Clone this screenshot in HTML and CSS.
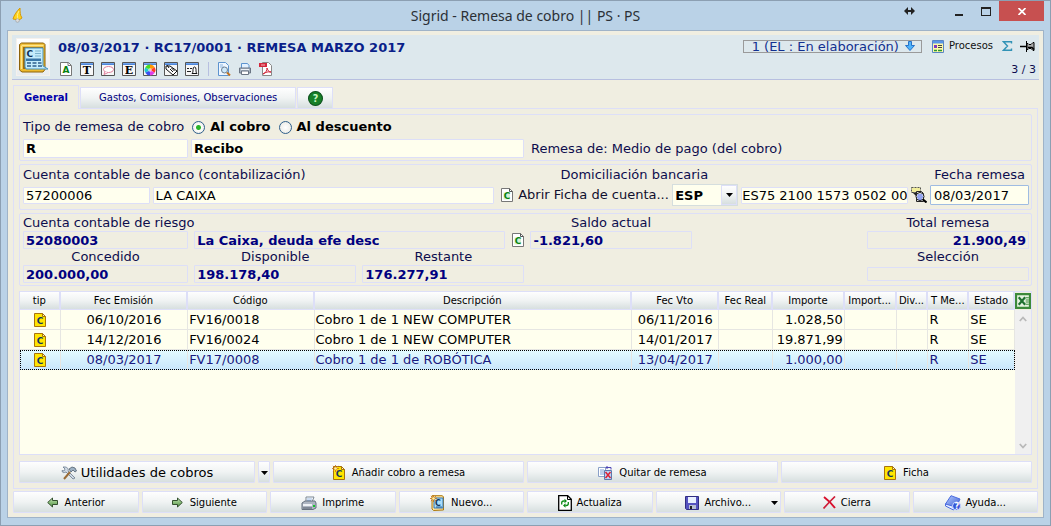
FILE: index.html
```html
<!DOCTYPE html>
<html lang="es">
<head>
<meta charset="utf-8">
<title>Sigrid - Remesa de cobro</title>
<link rel="stylesheet" href="styles.css">
</head>
<body>
<svg class="defs" aria-hidden="true">
  <defs>
    <linearGradient id="bar" x1="0" y1="0" x2="0" y2="1"><stop offset="0" stop-color="#7fb2f5"/><stop offset="1" stop-color="#3f78d0"/></linearGradient>
    <linearGradient id="blue" x1="0" y1="0" x2="1" y2="1"><stop offset="0" stop-color="#b9d0ff"/><stop offset="1" stop-color="#3353cf"/></linearGradient>
    <linearGradient id="green" x1="0" y1="0" x2="0" y2="1"><stop offset="0" stop-color="#c5e6b4"/><stop offset="1" stop-color="#4f9340"/></linearGradient>
    <symbol id="card" viewBox="0 0 12 14"><path d="M.5.5h8l3 3v10H.5z" fill="#ffe600" stroke="#a8730c"/><path d="M8.500.500v3h3z" fill="#fff6b0" stroke="#a8730c"/><text x="2.800" y="10.500" font-family="DejaVu Sans" font-size="9" font-weight="700" fill="#13375c">C</text></symbol>
    <symbol id="sheet" viewBox="0 0 12 14"><path d="M.5.5h8l3 3v10H.5z" fill="#fff" stroke="#777"/><path d="M8.500.500v3h3" fill="none" stroke="#555"/><path d="M2.500 4.500h6.500v7H2.500z" fill="#d5f0d5"/><text x="2.800" y="10.500" font-family="DejaVu Sans" font-size="9" font-weight="700" fill="#07820f">C</text></symbol>
    <symbol id="frame" viewBox="0 0 14 14"><path d="M.5.5h13v13H.5z" fill="#f7f7f7" stroke="#555"/><path d="M1 1h12v2H1z" fill="url(#bar)"/></symbol>
    <symbol id="spark" viewBox="0 0 8 8"><path d="M4 0v8M0 4h8M1 1l6 6M7 1L1 7" stroke="#c9781f"/><circle cx="4" cy="4" r="1.500" fill="#fff2a0"/></symbol>
    <symbol id="printer" viewBox="0 0 16 14"><path d="M5 6V1h8l-2 5z" fill="#fff" stroke="#7b8794"/><path d="M6 3h5M6 4.500h4" stroke="#6b9ad6" stroke-width=".7"/><path d="M1 7l3-2h10l1 2v5l-3 1.500H1z" fill="#aeb6c2" stroke="#66707e"/><path d="M2 8h9v2H2z" fill="#eef1f5"/><path d="M2 12h9" stroke="#505a68"/></symbol>
    <symbol id="caret" viewBox="0 0 7 4"><path d="M0 0h7L3.500 4z" fill="#000"/></symbol>
  </defs>
</svg>

<div class="window">
  <header class="titlebar">
    <svg class="app-icon" viewBox="0 0 12 16"><path d="M8 1C5 4 2 8 1 12l6 1 3-2C8 8 8 5 8 1z" fill="#ffd31c" stroke="#d59a08"/><path d="M7 4C5 7 5 10 6 12" stroke="#fff08a" fill="none"/><circle cx="5.500" cy="13.500" r="1.800" fill="#ddd" stroke="#999" stroke-width=".6"/></svg>
    <h1 class="caption">Sigrid - Remesa de cobro || PS · PS</h1>
    <div class="win-buttons">
      <button class="win-btn resize" aria-label="Mover"><svg width="11" height="8" viewBox="0 0 11 8"><path d="M1 4h9" stroke="#222" stroke-width="2"/><path d="M4 0v8L0 4zM7 0v8l4-4z" fill="#222"/></svg></button>
      <button class="win-btn min" aria-label="Minimizar"><svg width="10" height="9" viewBox="0 0 10 9"><path d="M1 8h8" stroke="#222" stroke-width="2"/></svg></button>
      <button class="win-btn max" aria-label="Maximizar"><svg width="10" height="9" viewBox="0 0 10 9"><path d="M0 0h10v9H0zM1 2v6h8V2z" fill="#222" fill-rule="evenodd"/></svg></button>
      <button class="win-btn close" aria-label="Cerrar"><svg width="8" height="7" viewBox="0 0 8 7"><path d="M.5 0l7 7M7.500 0l-7 7" stroke="#fff" stroke-width="1.700"/></svg></button>
    </div>
  </header>

  <main class="client">
    <section class="record">
      <div class="record-icon"><svg width="31" height="31" viewBox="0 0 31 31"><path d="M1.500 2.500l2-1.500h22l1.500 1.500v25L25 30H4l-2.500-2z" fill="#edb92c" stroke="#8d620a"/><path d="M3.500 3.500h22M3.500 4v23" stroke="#ffe58a" stroke-width="1.500" fill="none"/><path d="M5 5h20v22H5z" fill="#a06d0c"/><path d="M7 6h18v18l5 3H8l-1-2z" fill="#c4ecfb" stroke="#4893bd"/><path d="M17 9h6M17 11.500h6M17 14h6" stroke="#7ab2cc"/><path d="M8 16.500h15V19H8z" fill="#3977a8"/><path d="M9 21h4M14.500 21h4M20 21h3.500M9 24h4M14.500 24h4M20 24h4" stroke="#2e5f8c" stroke-width="1.500"/><text x="8.500" y="15" font-family="DejaVu Sans" font-weight="700" font-size="9" fill="#0d3157">C</text></svg></div>
      <div class="record-main">
        <h2 class="record-title">08/03/2017 · RC17/0001 · REMESA MARZO 2017</h2>
        <div class="tools">
          <button class="tool" aria-label="Ficha"><svg viewBox="0 0 14 14"><path d="M1.500.500h8l3 3v10h-11z" fill="#fff" stroke="#777"/><path d="M9 .500v3h3" fill="none" stroke="#777"/><text x="3.500" y="11" font-family="DejaVu Sans" font-size="9" font-weight="700" fill="#07820f">A</text></svg></button>
          <button class="tool" aria-label="Texto"><svg viewBox="0 0 14 14"><use href="#frame"/><text x="2.700" y="12" font-family="DejaVu Serif" font-size="11" font-weight="700">T</text></svg></button>
          <button class="tool" aria-label="Comentario"><svg viewBox="0 0 14 14"><use href="#frame"/><ellipse cx="7.500" cy="7.500" rx="5" ry="3" fill="#fff" stroke="#e07d9b"/><path d="M4 9.500l-1 3 4-2" fill="#fff" stroke="#e07d9b"/></svg></button>
          <button class="tool" aria-label="Etiqueta"><svg viewBox="0 0 14 14"><use href="#frame"/><text x="2.700" y="12" font-family="DejaVu Serif" font-size="11" font-weight="700">E</text></svg></button>
          <button class="tool" aria-label="Color"><svg viewBox="0 0 14 14"><use href="#frame"/><path d="M7 8V2.500A5.500 5.500 0 0 1 11.800 5.200z" fill="#ff9800"/><path d="M7 8l4.800-2.800a5.500 5.500 0 0 1 0 5.600z" fill="#ff3a2a"/><path d="M7 8l4.800 2.800A5.500 5.500 0 0 1 7 13.500z" fill="#e040e8"/><path d="M7 8v5.500a5.500 5.500 0 0 1-4.800-2.700z" fill="#3a50f0"/><path d="M7 8l-4.800 2.800a5.500 5.500 0 0 1 0-5.600z" fill="#20c8d0"/><path d="M7 8L2.200 5.200A5.500 5.500 0 0 1 7 2.500z" fill="#48dd20"/><circle cx="7" cy="8" r="2" fill="#fff" opacity=".5"/></svg></button>
          <button class="tool" aria-label="Marca"><svg viewBox="0 0 14 14"><use href="#frame"/><path d="M2 4h4l7 5-4 4-7-6z" fill="#fff" stroke="#111"/><path d="M3 3l2 3M6 7l3 3M7.500 6l3 3" stroke="#111"/></svg></button>
          <button class="tool" aria-label="Aviso"><svg viewBox="0 0 14 14"><use href="#frame"/><path d="M2 6.500h2m1 0h2M2 9.500h4" stroke="#222"/><path d="M7 11.500c1-1 1-2 1-4q0-2.500 1.500-2.500T11 7.500c0 2 0 3 1 4z" fill="#fff" stroke="#111"/></svg></button>
          <span class="tool-sep"></span>
          <button class="tool" aria-label="Vista previa"><svg viewBox="0 0 14 14"><path d="M1.500.500h7l3 3v10h-10z" fill="#eef6ff" stroke="#5d93cf"/><path d="M3 3h3M3 5h4" stroke="#8db5df"/><circle cx="7.500" cy="8" r="3" fill="#cfe9fb" stroke="#6d7f90"/><path d="M10 10.500l3 3" stroke="#bf701d" stroke-width="2"/></svg></button>
          <button class="tool" aria-label="Imprimir"><svg viewBox="0 0 14 14"><path d="M3.500 6V1.500h6l1.500 2V6" fill="#e3f1ff" stroke="#5d93cf"/><path d="M1.500 6h11v5h-11z" fill="#a8b4c2" stroke="#6b7583"/><path d="M3.500 9h7v3.500h-7z" fill="#fff" stroke="#6b7583"/><path d="M3 7.500h8" stroke="#eef1f5"/></svg></button>
          <button class="tool" aria-label="PDF"><svg viewBox="0 0 14 14"><path d="M3.500.500h6l3 3v10h-9z" fill="#fff" stroke="#888"/><path d="M0 1h8v4H0z" fill="#d3293d"/><path d="M2 3h4" stroke="#f6b6bd"/><path d="M4 12c3-1 4-4 4-6 1 3 2 4 4 4-3-.5-5 0-8 2z" fill="none" stroke="#cf2438"/></svg></button>
        </div>
      </div>
      <div class="record-side">
        <div class="side-row">
          <button class="state">1 (EL : En elaboración)<svg width="10" height="10" viewBox="0 0 10 10"><path d="M3.500.500h3v4h3L5 9.500.500 4.500h3z" fill="#4fb3fb" stroke="#2672c9"/></svg></button>
          <button class="process"><svg width="12" height="13" viewBox="0 0 12 13"><path d="M.5.500h11v12H.5z" fill="#fff9a8" stroke="#5a86c4"/><path d="M1 1h10v2.500H1z" fill="#5a96e8"/><path d="M2 5h3v3H2z" fill="#8038c0"/><path d="M6 5.500h4M6 7.500h4" stroke="#444"/><path d="M2 10.500h3M6 10.500h4" stroke="#2a9834" stroke-width="1.500"/></svg>Procesos</button>
          <button class="side-icon" aria-label="Suma"><svg width="11" height="10" viewBox="0 0 11 10"><path d="M9.500 2.500V.8H1.500L5.500 5l-4 4.200h8V7.500" fill="none" stroke="#3192b6" stroke-width="1.400"/></svg></button>
          <button class="side-icon" aria-label="Fijar"><svg width="16" height="11" viewBox="0 0 16 11"><path d="M0 5.500h6" stroke="#000" stroke-width="1.500"/><path d="M6.500 0v11" stroke="#000"/><path d="M7 2.500h1l1 1h2l2-2h1v8h-1l-2-2H9l-1 1H7z" fill="#aaa" stroke="#000"/><path d="M8 6.500h4l2 2" stroke="#000" stroke-width="1.500" fill="none"/></svg></button>
        </div>
        <div class="counter">3 / 3</div>
      </div>
    </section>

    <nav class="tabs">
      <button class="tab active">General</button>
      <button class="tab wide">Gastos, Comisiones, Observaciones</button>
      <button class="tab help" aria-label="Ayuda"><svg width="15" height="15" viewBox="0 0 14 14"><circle cx="7" cy="7" r="6.500" fill="#178029" stroke="#0c501c"/><text x="4.500" y="10.500" font-family="DejaVu Sans" font-size="9" font-weight="700" fill="#c8f5c0">?</text></svg></button>
    </nav>

    <section class="panel">
      <div class="group type-group">
        <div class="type-row">
          <span>Tipo de remesa de cobro</span>
          <label class="choice"><input type="radio" name="tipo" checked>Al cobro</label>
          <label class="choice"><input type="radio" name="tipo">Al descuento</label>
        </div>
        <div class="type-fields">
          <input class="field strong" aria-label="Código de medio" value="R">
          <input class="field strong" aria-label="Medio de pago" value="Recibo">
          <span class="note">Remesa de: Medio de pago (del cobro)</span>
        </div>
      </div>

      <div class="group bank-group">
        <label class="bank-label" for="cuenta">Cuenta contable de banco (contabilización)</label>
        <label class="home-label" for="pais">Domiciliación bancaria</label>
        <label class="date-label" for="fecha">Fecha remesa</label>
        <input class="field short" id="cuenta" value="57200006">
        <input class="field short" aria-label="Nombre del banco" value="LA CAIXA">
        <button class="link-btn"><svg width="12" height="14"><use href="#sheet"/></svg>Abrir Ficha de cuenta...</button>
        <div class="combo"><select id="pais"><option>ESP</option></select><span class="combo-arrow"><svg width="7" height="4"><use href="#caret"/></svg></span></div>
        <input class="field short iban" aria-label="IBAN" value="ES75 2100 1573 0502 00">
        <button class="icon-btn" aria-label="Buscar"><svg width="16" height="16" viewBox="0 0 16 16"><path d="M.5.500h9v5h-9z" fill="#f1ed9b" stroke="#555" stroke-dasharray="2 1"/><path d="M1 5l4 4V6z" fill="#222"/><path d="M5.500 4.500h5l2 2v8h-7z" fill="#fff" stroke="#222"/><circle cx="9" cy="9.500" r="4" fill="#f4f7ff" stroke="#111"/><path d="M6.500 8h5M6 10h6M7 12h4" stroke="#3450e0"/><path d="M12 12.500l3.500 3" stroke="#000" stroke-width="2"/></svg></button>
        <input class="field date" id="fecha" value="08/03/2017">
      </div>

      <div class="group risk-group">
        <label class="wide-label" for="riesgo">Cuenta contable de riesgo</label>
        <label class="saldo-label" for="saldo">Saldo actual</label>
        <label class="total-label" for="total">Total remesa</label>
        <input class="field calc" id="riesgo" value="52080003" readonly>
        <input class="field calc risk-name" aria-label="Nombre de riesgo" value="La Caixa, deuda efe desc" readonly>
        <button class="icon-btn" aria-label="Abrir ficha"><svg width="12" height="14"><use href="#sheet"/></svg></button>
        <input class="field calc" id="saldo" value="-1.821,60" readonly>
        <input class="field calc total" id="total" value="21.900,49" readonly>
        <label class="mid" for="concedido">Concedido</label>
        <label class="mid" for="disponible">Disponible</label>
        <label class="mid rest" for="restante">Restante</label>
        <label class="mid total" for="seleccion">Selección</label>
        <input class="field calc" id="concedido" value="200.000,00" readonly>
        <input class="field calc" id="disponible" value="198.178,40" readonly>
        <input class="field calc rest" id="restante" value="176.277,91" readonly>
        <input class="field calc slim total" id="seleccion" value="" readonly>
      </div>

      <div class="grid">
        <div class="grid-body">
          <table>
            <colgroup><col class="w-tip"><col class="w-date"><col class="w-code"><col class="w-desc"><col class="w-due"><col class="w-real"><col class="w-amount"><col class="w-cur"><col class="w-div"><col class="w-mode"><col class="w-state"></colgroup>
            <thead><tr><th>tip</th><th>Fec Emisión</th><th>Código</th><th>Descripción</th><th>Fec Vto</th><th>Fec Real</th><th>Importe</th><th>Import...</th><th>Div...</th><th>T Me...</th><th>Estado</th></tr></thead>
            <tbody>
              <tr><td class="center"><svg width="12" height="14"><use href="#card"/></svg></td><td class="center">06/10/2016</td><td>FV16/0018</td><td>Cobro 1 de 1 NEW COMPUTER</td><td class="center">06/11/2016</td><td></td><td class="num">1.028,50</td><td></td><td></td><td>R</td><td>SE</td></tr>
              <tr><td class="center"><svg width="12" height="14"><use href="#card"/></svg></td><td class="center">14/12/2016</td><td>FV16/0024</td><td>Cobro 1 de 1 NEW COMPUTER</td><td class="center">14/01/2017</td><td></td><td class="num">19.871,99</td><td></td><td></td><td>R</td><td>SE</td></tr>
              <tr class="selected"><td class="center"><svg width="12" height="14"><use href="#card"/></svg></td><td class="center">08/03/2017</td><td>FV17/0008</td><td>Cobro 1 de 1 de ROBÓTICA</td><td class="center">13/04/2017</td><td></td><td class="num">1.000,00</td><td></td><td></td><td>R</td><td>SE</td></tr>
            </tbody>
          </table>
        </div>
        <div class="grid-side">
          <button class="excel" aria-label="Exportar a Excel"><svg width="16" height="16" viewBox="0 0 15 15"><path d="M1 1h13v13H1z" fill="#e6f3e0" stroke="#3c8a3a" stroke-width="2"/><path d="M10 4.500h3M10 6.500h3M10 8.500h3M10 10.500h3" stroke="#3c8a3a"/><path d="M3.500 4l6 7M9.500 4l-6 7" stroke="#1f7030" stroke-width="2"/></svg></button>
          <div class="scroll">
            <svg width="8" height="6" viewBox="0 0 8 6"><path d="M.8 5L4 1.500 7.200 5" fill="none" stroke="#b9b9b9" stroke-width="1.800"/></svg>
            <svg width="8" height="6" viewBox="0 0 8 6"><path d="M.8 1L4 4.500 7.200 1" fill="none" stroke="#b9b9b9" stroke-width="1.800"/></svg>
          </div>
        </div>
      </div>

      <div class="actions">
        <div class="split">
          <button class="btn big"><svg width="16" height="14" viewBox="0 0 16 14"><path d="M2 1l2 2-1 2-2-.5C1 7 3 7 5 6l7 7 2-1-7-7c1-2-1-4-3-4z" fill="#cfd9e4" stroke="#68798c" stroke-width=".8"/><path d="M9 6l-6 7" stroke="#9a6b35" stroke-width="2"/><path d="M8 3l3-2 3 1 1.500 3-1.500 1-2-2-2 2z" fill="#9db1c4" stroke="#50606f" stroke-width=".8"/></svg>Utilidades de cobros</button>
          <button class="btn arrow" aria-label="Más utilidades"><svg width="7" height="4"><use href="#caret"/></svg></button>
        </div>
        <button class="btn"><svg width="13" height="15" viewBox="0 0 13 15"><use href="#card" x="1" y="1" width="12" height="14"/><use href="#spark" width="7" height="7"/></svg>Añadir cobro a remesa</button>
        <button class="btn"><svg width="14" height="14" viewBox="0 0 14 14"><path d="M.5 1.500h7v9h-7z" fill="#fff" stroke="#8aa0c8"/><path d="M2 4h4M2 6h4M2 8h4" stroke="#7ba0d8"/><path d="M6.500 4.500h7v9h-7z" fill="#bcd4f5" stroke="#5d78ad"/><path d="M7.500 6l5 6M12.500 6l-5 6" stroke="#de2134" stroke-width="1.500"/><path d="M8 1.500h5v2M9.500 0L8 1.500 9.500 3" fill="none" stroke="#4d45b5"/></svg>Quitar de remesa</button>
        <button class="btn"><svg width="12" height="14"><use href="#card"/></svg>Ficha</button>
      </div>
    </section>

    <footer class="commands">
      <button class="btn"><svg width="11" height="11" viewBox="0 0 11 11"><path d="M.7 5.500L5.500 1v2.500h5v4h-5V10z" fill="url(#green)" stroke="#33502e"/></svg>Anterior</button>
      <button class="btn"><svg width="11" height="11" viewBox="0 0 11 11"><path d="M10.300 5.500L5.500 1v2.500h-5v4h5V10z" fill="url(#green)" stroke="#33502e"/></svg>Siguiente</button>
      <button class="btn tight"><svg width="16" height="14" viewBox="0 0 16 14"><use href="#printer"/><path d="M12 9h2v2h-2z" fill="#15c42c"/></svg>Imprime</button>
      <button class="btn"><svg width="14" height="16" viewBox="0 0 14 16"><path d="M2 .700h10l1.500 1V15l-10 .500L2 14z" fill="#ffe29a" stroke="#ad7a10"/><path d="M4 3h9v10H4z" fill="#a9ddfa" stroke="#3474b0"/><path d="M6 12h6" stroke="#28639b"/><text x="5" y="10.500" font-family="DejaVu Sans" font-size="8" font-weight="700" fill="#13375c">C</text><use href="#spark" width="7" height="7"/></svg>Nuevo...</button>
      <button class="btn tight"><svg width="14" height="16" viewBox="0 0 14 16"><path d="M.700.700h9l3.600 3.600v11H.7z" fill="#fff" stroke="#000" stroke-width="1.300"/><path d="M9.500 1v3.500H13" fill="none" stroke="#000"/><path d="M3.700 9.500V8q0-2 2-2h1M10.300 7v1.500q0 2-2 2h-1" fill="none" stroke="#0a8a16" stroke-width="1.300"/><path d="M6.500 3.800v4.400L9 6zM7.500 8.300v4.400L5 10.500z" fill="#0a8a16"/></svg>Actualiza</button>
      <button class="btn file"><span></span><span class="btn-text"><svg width="14" height="14" viewBox="0 0 14 14"><path d="M.5.500h13v13h-12l-1-1z" fill="#5653c0" stroke="#312d82"/><path d="M3 1h8v6H3z" fill="#e9f0ff"/><path d="M4 9h7v4H4z" fill="#b8bfd2"/><path d="M5 10h2v3H5z" fill="#222"/></svg>Archivo...</span><svg width="7" height="4"><use href="#caret"/></svg></button>
      <button class="btn tight"><svg width="13" height="13" viewBox="0 0 13 13"><path d="M1 1c4 3 8 7 11 11" stroke="#d90f2c" stroke-width="2" fill="none"/><path d="M12 .500L6 6.500.500 12.500" stroke="#cf1d38" stroke-width="1.700" fill="none"/></svg>Cierra</button>
      <button class="btn tight"><svg width="16" height="16" viewBox="0 0 16 16"><path d="M6 .700L15 4l-4 9-10.500-4z" fill="url(#blue)" stroke="#4a6be0"/><path d="M.5 9v2l8 4 2-3z" fill="#e8efff" stroke="#4a6be0"/><circle cx="11.500" cy="11" r="4" fill="#3355d8" stroke="#c8d6ff"/><text x="9.500" y="14" font-family="DejaVu Sans" font-size="8" font-weight="700" fill="#fff">?</text></svg>Ayuda...</button>
    </footer>
  </main>
</div>
</body>
</html>
```

FILE: styles.css
```css
:root {
  --line: #dddff8;
  --paper: #f0eee1;
  --entry: #ffffee;
  --label: #0d0d4d;
  --navy: #00007f;
  --face: linear-gradient(#fefefe, #f0f3f3 50%, #d7dfdf);
}

* { box-sizing: border-box; }

body {
  margin: 0;
  font-family: "DejaVu Sans", Verdana, sans-serif;
  font-size: 13px;
  line-height: 16px;
  color: var(--label);
}

button, input, select {
  margin: 0;
  font: inherit;
  color: inherit;
}

button {
  padding: 0;
  border: 0;
  background: none;
}

svg { display: block; flex: none; }
.defs { position: absolute; width: 0; height: 0; }

.window {
  display: flex;
  flex-direction: column;
  min-height: 100vh;
  border: 1px solid #8c9fb2;
  background: #bad2e7;
}

/* Title bar */
.titlebar {
  display: grid;
  grid-template-columns: 1fr auto 1fr;
  height: 29px;
}
.app-icon { width: 12px; height: 16px; margin: 6px 0 0 11px; }
.caption {
  margin: 0;
  padding-top: 5px;
  font: 400 14px/20px "Noto Sans", "Open Sans", sans-serif;
  color: #2b3036;
}
.win-buttons {
  display: flex;
  justify-content: flex-end;
  align-items: flex-start;
  padding-right: 6px;
}
.win-btn { display: grid; place-items: center; width: 27px; height: 20px; }
.win-btn.resize { width: 30px; margin-right: 22px; }
.win-btn.min { width: 26px; }
.win-btn.close { width: 45px; background: #c75050; }

/* Client area */
.client {
  flex: 1;
  display: flex;
  flex-direction: column;
  margin: 0 6px 7px;
  padding: 4px;
  border: 1px solid #9fb3c8;
  background: var(--paper);
}

.record {
  display: flex;
  padding: 3px 3px 3px 4px;
  border-bottom: 1px solid #b7bfe0;
  background: #dde8ed;
}
.record-icon {
  display: grid;
  place-items: center;
  width: 34px;
  height: 38px;
  border: 1px solid #f5f1ec;
  background: linear-gradient(#fff, #e9ecee);
}
.record-main { flex: 1; padding-left: 8px; }
.record-title {
  margin: 0;
  padding-top: 2px;
  font-size: 13px;
  line-height: 16px;
  color: #0a1f8a;
}
.tools { display: flex; gap: 7px; padding: 6px 0 0 1px; }
.tool { width: 14px; height: 14px; }
.tool svg { width: 14px; height: 14px; }
.tool-sep { width: 1px; margin: 0 1px 0 2px; background: #b7bfe0; }
.record-side { display: flex; flex-direction: column; justify-content: space-between; }
.side-row { display: flex; align-items: center; gap: 7px; }
.state {
  display: flex;
  align-items: center;
  gap: 6px;
  padding: 0 6px 0 8px;
  border: 1px solid #9a9a9a;
  line-height: 11px;
  color: #123090;
}
.process {
  display: flex;
  align-items: center;
  gap: 5px;
  margin: 0 2px 0 3px;
  font-size: 10px;
  color: #111;
}
.counter { font-size: 11px; line-height: 12px; text-align: right; }

/* Tabs */
.tabs { display: flex; align-items: flex-end; gap: 1px; padding: 5px 1px 0; }
.tab {
  display: grid;
  place-items: center;
  height: 21px;
  padding: 0 18px;
  border: 1px solid var(--line);
  border-bottom: 0;
  background: var(--face);
  font-size: 10px;
  color: var(--navy);
}
.tab.active {
  height: 24px;
  margin-bottom: -1px;
  padding: 0 10px;
  background: var(--paper);
  font-weight: 700;
  color: #0000aa;
  position: relative;
}
.tab.help { width: 36px; padding: 0; }

.panel {
  flex: 1;
  display: flex;
  flex-direction: column;
  margin: 0 1px 2px;
  padding: 5px;
  border: 1px solid var(--line);
}

.group {
  margin-bottom: 3px;
  padding: 2px 2px 2px 3px;
  border: 1px solid var(--line);
  border-radius: 2px;
}

/* Entries */
.field {
  min-width: 0;
  width: 100%;
  height: 19px;
  padding: 0 2px;
  border: 1px solid var(--line);
  border-radius: 1px;
  background: var(--entry);
  color: #000;
}
.field.short { height: 17px; }
.field.iban { padding: 0; }
.field.strong { font-weight: 700; }
.field.calc {
  height: 18px;
  background: transparent;
  font-weight: 700;
  color: var(--navy);
}
.field.calc.slim { height: 14px; }
.field.date { height: 20px; border: 1px solid #9fbce2; padding: 0 3px; }

.type-row { display: flex; align-items: center; height: 20px; }
.choice {
  display: flex;
  align-items: center;
  gap: 5px;
  margin-left: 8px;
  font-weight: 700;
  color: #000;
}
.choice input {
  appearance: none;
  width: 13px;
  height: 13px;
  border: 1px solid #2f5f8c;
  border-radius: 50%;
  background: radial-gradient(#fff, #e6e6e0);
}
.choice input:checked { background: radial-gradient(#2ab52a 0 2px, #fdfdfb 3px, #e6e6e0); }

.type-fields {
  display: grid;
  grid-template-columns: 165fr 333fr 502fr;
  gap: 3px;
  align-items: center;
  padding-top: 2px;
}
.note { padding-left: 4px; white-space: nowrap; }

.bank-group {
  display: grid;
  grid-template-columns: 126fr 340fr 172px 66px 166fr 16px 99px;
  column-gap: 3px;
  align-items: center;
}
.bank-label { grid-column: 1 / 3; }
.home-label { grid-column: 3 / 5; padding-right: 30px; text-align: right; }
.date-label { grid-column: 6 / 8; padding-right: 4px; text-align: right; }
.link-btn {
  display: flex;
  align-items: center;
  gap: 5px;
  padding-left: 4px;
  color: #10102e;
  white-space: nowrap;
}
.icon-btn { display: grid; place-items: center; }
.combo { position: relative; height: 22px; margin: 1px 0; }
.combo select {
  appearance: none;
  width: 100%;
  height: 100%;
  padding: 1px 2px 0;
  border: 1px solid #d5dede;
  border-radius: 0;
  background: var(--entry);
  font-weight: 700;
  color: #000;
}
.combo-arrow {
  position: absolute;
  inset: 1px 1px 1px auto;
  display: grid;
  place-items: center;
  width: 16px;
  border: 1px solid var(--line);
  background: var(--face);
  pointer-events: none;
}

.risk-group {
  display: grid;
  grid-template-columns: 165fr 162fr 143fr 13px 161fr 163fr 162fr;
  column-gap: 6px;
  align-items: center;
  margin-bottom: 5px;
  padding-top: 1px;
}
.wide-label { grid-column: 1 / 5; }
.saldo-label { grid-column: 5; text-align: center; }
.total-label { grid-column: 7; text-align: center; }
.risk-name { grid-column: 2 / 4; }
.mid { text-align: center; }
.rest { grid-column: 3 / 5; }
.total { grid-column: 7; }
#total { text-align: right; }

/* Receipts grid */
.grid {
  flex: 1;
  display: flex;
  min-height: 120px;
  border: 1px solid var(--line);
  background: var(--entry);
}
.grid-body { flex: 1; min-width: 0; }
.grid table {
  width: 100%;
  table-layout: fixed;
  border-collapse: separate;
  border-spacing: 0;
}
.w-tip { width: 4.1%; }
.w-date { width: 12.8%; }
.w-code { width: 12.7%; }
.w-desc { width: 31.9%; }
.w-due { width: 8.8%; }
.w-real { width: 5.4%; }
.w-amount { width: 7.2%; }
.w-cur { width: 5.2%; }
.w-div { width: 3.2%; }
.w-mode { width: 4.1%; }
.w-state { width: 4.6%; }
.grid th {
  height: 18px;
  padding: 0;
  border-right: 2px solid var(--line);
  border-bottom: 1px solid var(--line);
  background: var(--face);
  font-size: 10px;
  font-weight: 400;
  line-height: 17px;
  color: #000;
  white-space: nowrap;
}
.grid td {
  height: 20px;
  padding: 1px 1px 0;
  border-right: 1px solid #e6e6e2;
  border-bottom: 1px solid #e6e6e2;
  line-height: 18px;
  color: #000;
  white-space: nowrap;
}
.grid td svg { margin: 0 auto; }
.grid td.center { text-align: center; }
.grid td.num { text-align: right; }
.grid tr.selected { outline: 1px dotted #000; outline-offset: -1px; background: linear-gradient(#e3fbff, #c9e6fb); }
.grid tr.selected td { color: #1a1a80; border-bottom-color: transparent; }
.grid-side { display: flex; flex-direction: column; width: 16px; }
.excel { display: grid; place-items: center; height: 18px; background: var(--paper); }
.scroll {
  flex: 1;
  display: flex;
  flex-direction: column;
  justify-content: space-between;
  align-items: center;
  padding: 6px 0 5px;
  background: #f0f0f0;
}

/* Buttons */
.actions { display: grid; grid-template-columns: repeat(4, 1fr); gap: 3px; padding-top: 6px; }
.split { display: flex; gap: 3px; }
.btn {
  display: flex;
  justify-content: center;
  align-items: center;
  gap: 7px;
  min-width: 0;
  height: 22px;
  padding: 1px 0 0;
  border: 1px solid var(--line);
  border-radius: 1px;
  background: var(--face);
  font-size: 10px;
  color: #000;
  white-space: nowrap;
}
.btn.big { flex: 1; gap: 4px; font-size: 13px; }
.btn.tight { gap: 5px; }
.btn.arrow { width: 12px; }
.btn.file { display: grid; grid-template-columns: 1fr auto 1fr; padding: 1px 2px 0; }
.btn.file > svg { justify-self: end; }
.btn-text { display: flex; align-items: center; gap: 5px; }
.commands { display: grid; grid-template-columns: repeat(8, 1fr); gap: 3px; padding: 0 1px; }
```
